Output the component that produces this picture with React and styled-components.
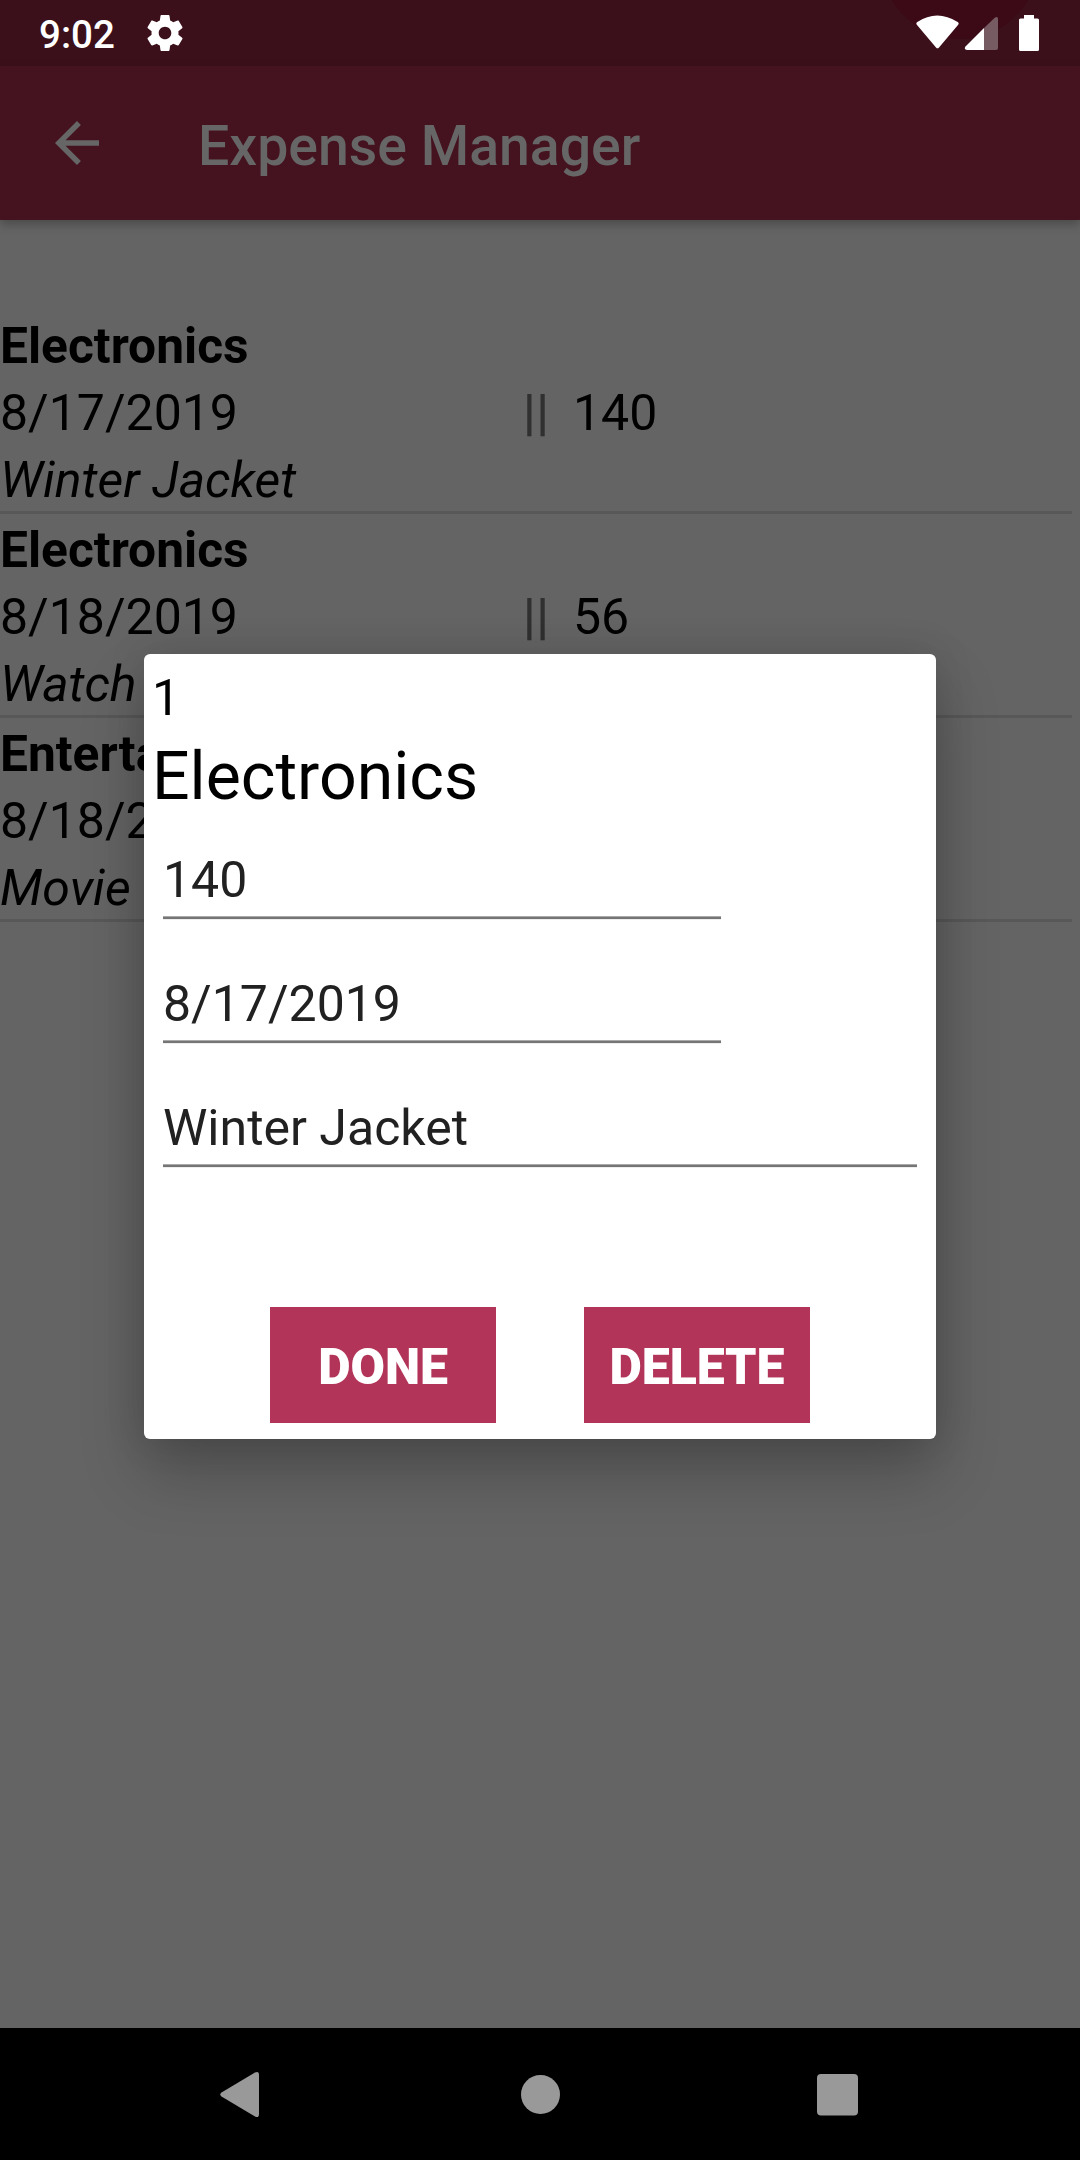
import React from "react";
import styled, { createGlobalStyle } from "styled-components";

const Global = createGlobalStyle`
  * { box-sizing: border-box; }
  html, body { margin: 0; padding: 0; }
  body { font-family: Roboto, "Noto Sans", sans-serif; background: #000; }
`;

const Screen = styled.div`
  position: relative;
  width: 1080px;
  height: 2160px;
  display: flex;
  flex-direction: column;
  background: #646464;
  overflow: hidden;
`;

const StatusBar = styled.header`
  position: relative;
  height: 66px;
  flex: none;
  display: flex;
  align-items: center;
  gap: 32px;
  padding: 0 40px 0 39px;
  background: #3c101b;
  color: #fff;
  overflow: hidden;
`;

const CornerGlow = styled.div`
  position: absolute;
  left: 881px;
  top: -119px;
  width: 158px;
  height: 158px;
  border-radius: 50%;
  background: #3b0a16;
`;

const Clock = styled.span`
  font-size: 38.5px;
  font-weight: 500;
  line-height: 66px;
  padding-top: 3px;
`;

const Toolbar = styled.div`
  position: relative;
  z-index: 1;
  height: 154px;
  flex: none;
  display: flex;
  align-items: center;
  padding-left: 44px;
  background: #451320;
  color: #666;
  box-shadow: 0 4px 10px rgba(0, 0, 0, 0.28);
`;

const Title = styled.h1`
  margin: 0 0 0 88px;
  padding-top: 7px;
  font-size: 55.4px;
  font-weight: 500;
  line-height: 64px;
`;

const List = styled.main`
  flex: 1;
  padding: 90px 8px 0 0;
`;

const Row = styled.article`
  height: 204px;
  padding-top: 3px;
  border-bottom: 3px solid #585858;
  font-size: 50px;
  line-height: 67px;
  color: #000;
`;

const Category = styled.div`
  font-size: 49.7px;
  font-weight: 700;
`;

const Line = styled.div`
  display: flex;
`;

const DateText = styled.span`
  width: 523px;
`;

const Separator = styled.span`
  width: 50px;
  font-weight: 700;
  letter-spacing: 0.6px;
  color: #303030;
`;

const Note = styled.div`
  font-style: italic;
`;

const NavBar = styled.nav`
  height: 132px;
  flex: none;
  display: flex;
  align-items: center;
  justify-content: space-between;
  padding: 0 208px;
  background: #000;
`;

const Icon = styled.svg`
  display: block;
  flex: none;
  width: ${(p) => p.$w}px;
  height: ${(p) => p.$h}px;
`;

const StatusIcons = styled.div`
  position: relative;
  margin-left: auto;
  display: flex;
`;

const Dialog = styled.section`
  position: absolute;
  z-index: 2;
  left: 144px;
  top: 654px;
  width: 792px;
  height: 785px;
  display: flex;
  flex-direction: column;
  padding: 11px 8px 16px;
  background: #fff;
  border-radius: 6px;
  box-shadow: 0 34px 64px rgba(0, 0, 0, 0.24), 0 0 40px rgba(0, 0, 0, 0.12);
  color: #000;
`;

const ItemId = styled.div`
  font-size: 50px;
  line-height: 67px;
`;

const ItemCategory = styled.div`
  margin-bottom: -3px;
  font-size: 66.2px;
  line-height: 89px;
`;

const Field = styled.label`
  display: block;
  height: 124px;
  padding: 0 11px;
  width: ${(p) => (p.$wide ? "100%" : "580px")};
`;

const FieldValue = styled.div`
  height: 102px;
  padding-top: 33px;
  background: linear-gradient(#aaa 0 1px, #757575 1px 3px, #eee 3px 4px) bottom / 100% 4px no-repeat;
  font-size: 50px;
  line-height: 58px;
  color: #212121;
`;

const Actions = styled.div`
  margin-top: auto;
  display: flex;
  gap: 88px;
  padding-left: 118px;
`;

const ActionButton = styled.button`
  width: 226px;
  height: 116px;
  padding: 3px 0 0;
  border: 0;
  background: #b23559;
  color: #fff;
  font: 900 50px/58px Roboto, sans-serif;
  letter-spacing: -0.1px;
`;

const expenses = [
  { category: "Electronics", date: "8/17/2019", amount: "140", note: "Winter Jacket" },
  { category: "Electronics", date: "8/18/2019", amount: "56", note: "Watch" },
  { category: "Entertainment", date: "8/18/2019", amount: "", note: "Movie" },
];

export default function App() {
  return (
    <Screen>
      <Global />
      <StatusBar>
        <CornerGlow />
        <Clock>9:02</Clock>
        <Icon $w={36} $h={36} viewBox="2 2 20 20" fill="#fff">
          <path d="M19.43 12.98c.04-.32.07-.64.07-.98s-.03-.66-.07-.98l2.110-1.650c.19-.15.24-.42.12-.64l-2-3.460c-.12-.22-.39-.3-.61-.22l-2.490 1c-.52-.4-1.080-.73-1.690-.98l-.38-2.650C14.460 2.180 14.250 2 14 2h-4c-.25 0-.46.18-.49.42l-.38 2.650c-.61.25-1.170.59-1.690.98l-2.490-1c-.23-.09-.49 0-.61.22l-2 3.460c-.13.22-.07.49.12.64l2.110 1.650c-.04.32-.07.65-.07.98s.03.66.07.98l-2.110 1.650c-.19.15-.24.42-.12.64l2 3.460c.12.22.39.3.61.22l2.490-1c.52.4 1.080.73 1.690.98l.38 2.650c.03.24.24.42.49.42h4c.25 0 .46-.18.49-.42l.38-2.650c.61-.25 1.170-.59 1.690-.98l2.490 1c.23.09.49 0 .61-.22l2-3.460c.12-.22.07-.49-.12-.64l-2.110-1.650zM12 15.500c-1.930 0-3.500-1.570-3.500-3.500s1.570-3.500 3.500-3.500 3.500 1.570 3.500 3.500-1.570 3.500-3.500 3.500z" />
        </Icon>
        <StatusIcons>
          <Icon $w={125} $h={38} viewBox="915 14 125 38">
            <path d="M917.3 22Q937 9 957.7 22Q959.5 23.300 958 25L939 47.500Q937.500 49.200 936 47.500L917 25Q915.500 23.300 917.300 22Z" fill="#fff" />
            <path d="M984 28V50H967Q963.500 49.500 965.500 46.500Z" fill="#fff" />
            <path d="M984 28L995 17.500Q998 16 998 19V48Q998 50 996 50H984Z" fill="#775b63" />
            <path d="M1024 15H1034V18.500H1037.500Q1039 18.500 1039 20V49.500Q1039 51 1037.500 51H1020.500Q1019 51 1019 49.500V20Q1019 18.500 1020.500 18.500H1024Z" fill="#fff" />
          </Icon>
        </StatusIcons>
      </StatusBar>

      <Toolbar>
        <Icon $w={66} $h={66} viewBox="0 0 24 24" fill="#666">
          <path d="M20 11H7.830l5.590-5.590L12 4l-8 8 8 8 1.410-1.410L7.830 13H20v-2z" />
        </Icon>
        <Title>Expense Manager</Title>
      </Toolbar>

      <List>
        {expenses.map((e, i) => (
          <Row key={i}>
            <Category>{e.category}</Category>
            <Line>
              <DateText>{e.date}</DateText>
              <Separator>||</Separator>
              <span>{e.amount}</span>
            </Line>
            <Note>{e.note}</Note>
          </Row>
        ))}
      </List>

      <NavBar>
        <Icon $w={64} $h={50} viewBox="208 2069 64 50" fill="#999">
          <path d="M221.500 2092.500L255 2072.500Q259 2070.500 259 2075V2114Q259 2118.500 255 2116.500L221.500 2096.500Q219 2094.500 221.500 2092.500Z" />
        </Icon>
        <Icon $w={40} $h={40} viewBox="0 0 40 40" fill="#999">
          <circle cx="20.500" cy="20.500" r="19.500" />
        </Icon>
        <Icon $w={64} $h={50} viewBox="808 2069 64 50" fill="#999">
          <rect x="817" y="2074" width="41" height="41.500" rx="4" />
        </Icon>
      </NavBar>

      <Dialog>
        <ItemId>1</ItemId>
        <ItemCategory>Electronics</ItemCategory>
        <Field><FieldValue>140</FieldValue></Field>
        <Field><FieldValue>8/17/2019</FieldValue></Field>
        <Field $wide><FieldValue>Winter Jacket</FieldValue></Field>
        <Actions>
          <ActionButton>DONE</ActionButton>
          <ActionButton>DELETE</ActionButton>
        </Actions>
      </Dialog>
    </Screen>
  );
}
